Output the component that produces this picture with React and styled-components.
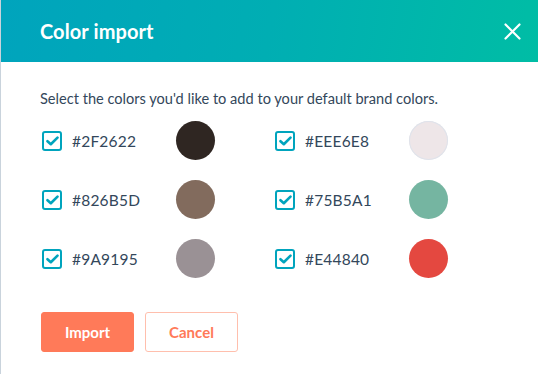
import styled, { createGlobalStyle } from 'styled-components';

const GlobalStyle = createGlobalStyle`
  body {
    margin: 0;
    background: #ffffff;
    font-family: Lato, "Open Sans", sans-serif;
  }
`;

const Dialog = styled.div`
  width: 538px;
  height: 374px;
  box-sizing: border-box;
  border-left: 1px solid #c9d3dc;
  background: #ffffff;
  overflow: hidden;
`;

const Header = styled.header`
  height: 62px;
  padding: 0 16px 0 39px;
  display: flex;
  align-items: center;
  justify-content: space-between;
  background: linear-gradient(100deg, #00a4bd 0%, #00aeb3 50%, #00bda5 100%);
`;

const Title = styled.h1`
  margin: 0;
  font-size: 20px;
  font-weight: 700;
  color: #ffffff;
  letter-spacing: 0.1px;
`;

const CloseButton = styled.button`
  width: 20px;
  height: 20px;
  padding: 0;
  border: none;
  background: transparent;
  display: flex;
  align-items: center;
  justify-content: center;
  cursor: pointer;
`;

const Body = styled.div`
  padding: 27px 0 0 39px;
`;

const Intro = styled.p`
  margin: 0 0 12px;
  font-size: 14.6px;
  line-height: 20px;
  color: #33475b;
`;

const ColorGrid = styled.div`
  display: grid;
  grid-template-columns: 233px 234px;
  row-gap: 20px;
  padding-left: 2px;
`;

const ColorRow = styled.label`
  height: 39px;
  display: flex;
  align-items: center;
`;

const Box = styled.span`
  width: 20px;
  height: 20px;
  box-sizing: border-box;
  border: 2px solid #00a4bd;
  border-radius: 3px;
  display: flex;
  align-items: center;
  justify-content: center;
  flex-shrink: 0;
`;

const Hex = styled.span`
  margin-left: 10px;
  width: 104px;
  font-size: 15.5px;
  color: #33475b;
  letter-spacing: 0.2px;
`;

const Swatch = styled.span`
  width: 39px;
  height: 39px;
  border-radius: 50%;
  background: ${p => p.$color};
  box-shadow: ${p => (p.$light ? 'inset 0 0 0 1px #dfe3eb' : 'none')};
`;

const Actions = styled.div`
  display: flex;
  gap: 11px;
  margin-top: 34px;
  padding-left: 1px;
`;

const Button = styled.button`
  width: 93px;
  height: 40px;
  box-sizing: border-box;
  border-radius: 3px;
  font-family: Lato, "Open Sans", sans-serif;
  font-size: 15px;
  font-weight: 700;
  cursor: pointer;
  border: 1px solid ${p => (p.$primary ? '#ff7a59' : '#ffbfad')};
  background: ${p => (p.$primary ? '#ff7a59' : '#ffffff')};
  color: ${p => (p.$primary ? '#ffffff' : '#ff7a59')};
`;

const colors = [
  { hex: '#2F2622' },
  { hex: '#EEE6E8', light: true },
  { hex: '#826B5D' },
  { hex: '#75B5A1' },
  { hex: '#9A9195' },
  { hex: '#E44840' },
];

function Check() {
  return (
    <svg width="13" height="10" viewBox="0 0 13 10" fill="none">
      <path d="M1.5 5.2 L4.8 8.2 L11.5 1.6" stroke="#00a4bd" strokeWidth="2.6" strokeLinecap="round" strokeLinejoin="round" />
    </svg>
  );
}

export default function App() {
  return (
    <>
      <GlobalStyle />
      <Dialog>
        <Header>
          <Title>Color import</Title>
          <CloseButton aria-label="Close">
            <svg width="17" height="17" viewBox="0 0 17 17">
              <path d="M1.5 1.5 L15.5 15.5 M15.5 1.5 L1.5 15.5" stroke="#ffffff" strokeWidth="2.2" strokeLinecap="round" />
            </svg>
          </CloseButton>
        </Header>
        <Body>
          <Intro>Select the colors you'd like to add to your default brand colors.</Intro>
          <ColorGrid>
            {colors.map(c => (
              <ColorRow key={c.hex}>
                <Box><Check /></Box>
                <Hex>{c.hex}</Hex>
                <Swatch $color={c.hex} $light={c.light} />
              </ColorRow>
            ))}
          </ColorGrid>
          <Actions>
            <Button $primary>Import</Button>
            <Button>Cancel</Button>
          </Actions>
        </Body>
      </Dialog>
    </>
  );
}
